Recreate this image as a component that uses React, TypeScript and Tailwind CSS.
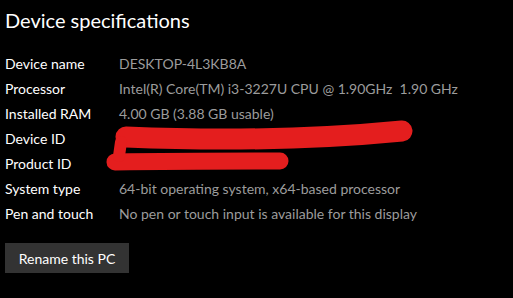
export default function App() {
  const rows: [string, string][] = [
    ["Device name", "DESKTOP-4L3KB8A"],
    ["Processor", "Intel(R) Core(TM) i3-3227U CPU @ 1.90GHz  1.90 GHz"],
    ["Installed RAM", "4.00 GB (3.88 GB usable)"],
    ["Device ID", ""],
    ["Product ID", ""],
    ["System type", "64-bit operating system, x64-based processor"],
    ["Pen and touch", "No pen or touch input is available for this display"],
  ];

  return (
    <div className="relative w-[513px] h-[298px] bg-black text-white font-['Lato',sans-serif] pl-[5px] overflow-hidden">
      <h1 className="pt-[6px] h-[51px] text-[20px] leading-[28px]">Device specifications</h1>

      <div>
        {rows.map(([label, value]) => (
          <div key={label} className="flex items-center h-[25px] text-[14px]">
            <span className="w-[114px] text-white">{label}</span>
            <span className="text-[#9c9c9c] whitespace-pre">{value}</span>
          </div>
        ))}
      </div>

      <button className="mt-[17px] w-[124px] h-[30px] bg-[#333333] text-white text-[14px]">
        Rename this PC
      </button>

      {/* scribbled-out IDs */}
      <svg className="absolute left-0 top-0 pointer-events-none" width="513" height="298" viewBox="0 0 513 298">
        <g stroke="#e41e1e" strokeLinecap="round" fill="none">
          <path d="M126 137 C 200 140, 300 141, 402 131" strokeWidth="21" />
          <path d="M115 162 C 180 161, 240 161, 280 161" strokeWidth="17" />
          <path d="M121 142 L 119 156" strokeWidth="12" />
        </g>
      </svg>
    </div>
  );
}
